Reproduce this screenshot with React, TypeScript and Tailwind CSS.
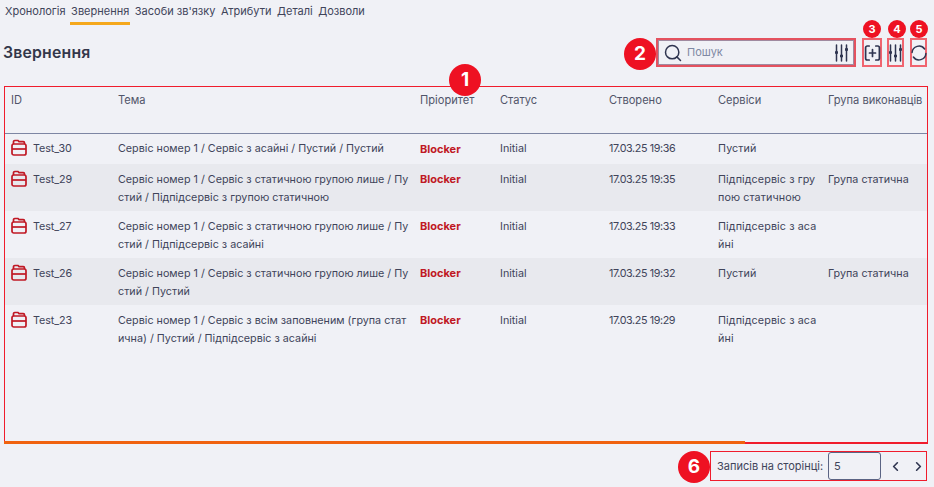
import React from "react";
import { Search, ChevronLeft, ChevronRight } from "lucide-react";

const columns = "grid grid-cols-[107px_302px_80px_109px_109px_110px_1fr]";

const rows = [
  { id: "Test_30", theme: ["Сервіс номер 1 / Сервіс з асайні / Пустий / Пустий"], created: "17.03.25 19:36", service: ["Пустий"], group: "" },
  { id: "Test_29", theme: ["Сервіс номер 1 / Сервіс з статичною групою лише / Пу", "стий / Підпідсервіс з групою статичною"], created: "17.03.25 19:35", service: ["Підпідсервіс з гру", "пою статичною"], group: "Група статична", grey: true },
  { id: "Test_27", theme: ["Сервіс номер 1 / Сервіс з статичною групою лише / Пу", "стий / Підпідсервіс з асайні"], created: "17.03.25 19:33", service: ["Підпідсервіс з аса", "йні"], group: "" },
  { id: "Test_26", theme: ["Сервіс номер 1 / Сервіс з статичною групою лише / Пу", "стий / Пустий"], created: "17.03.25 19:32", service: ["Пустий"], group: "Група статична", grey: true },
  { id: "Test_23", theme: ["Сервіс номер 1 / Сервіс з всім заповненим (група стат", "ична) / Пустий / Підпідсервіс з асайні"], created: "17.03.25 19:29", service: ["Підпідсервіс з аса", "йні"], group: "" },
];

const tabs = ["Хронологія", "Звернення", "Засоби зв'язку", "Атрибути", "Деталі", "Дозволи"];

const Badge = ({ n, className }: { n: number; className: string }) => (
  <span className={`absolute flex items-center justify-center rounded-full bg-[#ee1122] font-bold text-white ${className}`}>{n}</span>
);

const FolderIcon = () => (
  <svg width="16" height="17" viewBox="0 0 16 17" fill="none" stroke="#c01824" strokeWidth="1.7" className="-mt-px shrink-0">
    <path d="M2.500 5V2.800A1.300 1.300 0 0 1 3.800 1.500H7L8 2.600H12.200A1.300 1.300 0 0 1 13.500 3.900V5" />
    <rect x="1" y="5" width="14" height="11" rx="1.800" />
    <path d="M1 10h14" />
  </svg>
);

const SlidersIcon = () => (
  <svg width="15" height="18" viewBox="0 0 15 18" fill="none" stroke="#2f3550" strokeWidth="1.500" strokeLinecap="round" className="shrink-0">
    <path d="M2.500 1v16M7.500 1v16M12.500 1v16" />
    <path d="M1 8.500h3M6 12h3M11 5.500h3" strokeWidth="2.600" strokeLinecap="butt" />
  </svg>
);

const ColumnsIcon = () => (
  <svg width="17" height="18" viewBox="0 0 17 18" fill="none" stroke="#2f3550" strokeWidth="1.700" strokeLinecap="round" className="shrink-0">
    <path d="M5.200 2H3.300A1.700 1.700 0 0 0 1.600 3.700V14.300A1.700 1.700 0 0 0 3.300 16H5.200" />
    <path d="M11.800 2h1.900A1.700 1.700 0 0 1 15.400 3.700V14.300A1.700 1.700 0 0 1 13.700 16H11.800" />
    <path d="M8.500 5.500v7M5.500 9h6" />
  </svg>
);

const RefreshIcon = () => (
  <svg width="16" height="16" viewBox="0 0 16 16" fill="none" stroke="#2f3550" strokeWidth="1.500" strokeLinecap="round" className="shrink-0">
    <path d="M1.100 7.500A6.900 6.900 0 0 1 13.600 4" />
    <path d="M14.900 8.500A6.900 6.900 0 0 1 2.400 12" />
  </svg>
);

export default function App() {
  return (
    <div className="flex h-[487px] w-[934px] flex-col overflow-hidden bg-[#f0f1f6] font-['Inter',sans-serif] text-[11px] text-[#40445a]">
      <div className="flex h-[25px] items-start gap-[3.5px] pl-[4px] pt-[4px]">
        {tabs.map((tab, i) => (
          <div key={tab} className={`h-[21px] px-px leading-[15px] ${i === 1 ? "border-b-[3px] border-[#f5a81c]" : ""}`}>
            {tab}
          </div>
        ))}
      </div>

      <div className="mt-[13px] flex h-[29px] items-center pl-[3px] pr-[7px]">
        <h1 className="text-[15.8px] font-semibold tracking-[0.2px] text-[#33374a]">Звернення</h1>
        <div className="relative ml-auto flex h-[29px] w-[200px] items-center border-2 border-[#e4525f] pl-[5px] pr-[5px] shadow-[inset_0_0_0_1px_#a08aa0]">
          <Badge n={2} className="left-[-34px] top-[-2px] h-[32px] w-[32px] text-[19px]" />
          <Search size={20} color="#2f3550" strokeWidth={1.8} />
          <span className="ml-[4px] text-[#7f88a3]">Пошук</span>
          <span className="ml-auto flex"><SlidersIcon /></span>
        </div>
        <div className="relative ml-[6px] flex h-[29px] w-[20px] items-center justify-center border-2 border-[#f0646f]">
          <Badge n={3} className="left-[-1px] top-[-20px] h-[18px] w-[18px] text-[11px]" />
          <ColumnsIcon />
        </div>
        <div className="relative ml-[5px] flex h-[29px] w-[17px] items-center justify-center border-2 border-[#f0646f]">
          <Badge n={4} className="left-[-1px] top-[-20px] h-[18px] w-[18px] text-[11px]" />
          <SlidersIcon />
        </div>
        <div className="relative ml-[6px] flex h-[29px] w-[17px] items-center justify-center border-2 border-[#f0646f]">
          <Badge n={5} className="left-[-2px] top-[-20px] h-[18px] w-[18px] text-[11px]" />
          <RefreshIcon />
        </div>
      </div>

      <div className="relative mx-[4px] mt-[19px] h-[358px] w-[924px] border border-b-0 border-[#f01c2c]">
        <Badge n={1} className="left-[444px] top-[-23px] h-[32px] w-[32px] text-[19px]" />
        <div className={`${columns} h-[47px] border-b border-[#7d86a3] pl-[6px] pt-[5px] text-[11.1px] text-[#50556a]`}>
          <div>ID</div>
          <div>Тема</div>
          <div>Пріоритет</div>
          <div>Статус</div>
          <div>Створено</div>
          <div>Сервіси</div>
          <div className="whitespace-nowrap">Група виконавців</div>
        </div>
        {rows.map((row, i) => (
          <div key={row.id} className={`${columns} ${i === 0 ? "h-[30px] pt-[6px]" : "h-[47px] pt-[7px]"} pl-[6px] text-[10.75px] leading-[18px] ${row.grey ? "bg-[#e8e9ee]" : ""}`}>
            <div className="flex items-start gap-[6px]">
              <FolderIcon />
              <span className="tracking-[-0.1px]">{row.id}</span>
            </div>
            <div className="whitespace-nowrap">
              {row.theme.map((line) => (
                <div key={line}>{line}</div>
              ))}
            </div>
            <div className={`text-[11px] font-bold text-[#c01824] ${i === 0 ? "" : "-mt-px"}`}>Blocker</div>
            <div>Initial</div>
            <div className="tracking-[-0.4px]">{row.created}</div>
            <div className="whitespace-nowrap tracking-[0.1px]">
              {row.service.map((line) => (
                <div key={line}>{line}</div>
              ))}
            </div>
            <div className="whitespace-nowrap">{row.group}</div>
          </div>
        ))}
        <div className="absolute bottom-0 left-[-1px] right-[-1px] h-[2px] bg-[#f01c2c]" />
        <div className="absolute bottom-0 left-[-1px] h-[3px] w-[741px] bg-[#f0620f]" />
      </div>

      <div className="mt-[7px] flex justify-end pr-[7px]">
        <div className="relative flex h-[30px] w-[217px] items-center border border-[#f01c2c] pl-[6px]">
          <Badge n={6} className="left-[-33px] top-[-1px] h-[32px] w-[32px] text-[19px]" />
          <span>Записів на сторінці:</span>
          <div className="ml-auto flex h-[28px] w-[53px] items-center rounded-[3px] border border-[#5b6484] pl-[5px]">5</div>
          <div className="ml-[7px] flex w-[38px] items-center justify-between">
            <ChevronLeft size={15} color="#2f3550" strokeWidth={2.6} />
            <ChevronRight size={15} color="#2f3550" strokeWidth={2.6} />
          </div>
        </div>
      </div>
    </div>
  );
}
